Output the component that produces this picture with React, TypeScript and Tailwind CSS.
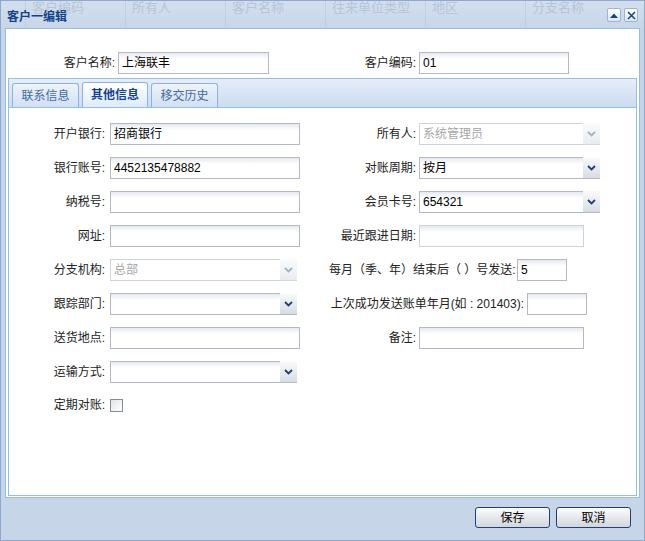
import React from 'react';

const font = "font-['Liberation_Sans','Noto_Sans_CJK_SC',sans-serif]";
const fieldBg = 'bg-[linear-gradient(to_bottom,#e6e9ee,#ffffff_6px)]';

const Chevron: React.FC<{ disabled?: boolean }> = ({ disabled }) => (
  <svg width="9" height="6" viewBox="0 0 9 6">
    <path d="M1 1 L4.5 4.5 L8 1" stroke={disabled ? '#9fb3cf' : '#1d3f7f'} strokeWidth="1.8" fill="none" />
  </svg>
);

const TextField: React.FC<{ value?: string; w: string; faded?: boolean }> = ({ value, w, faded }) => (
  <div
    className={`${w} h-[22px] border ${faded ? 'border-[#cdd3dc]' : 'border-[#b5b8c8]'} ${fieldBg} flex items-center px-[3px] text-[12px] text-black`}
  >
    {value}
  </div>
);

const Combo: React.FC<{ value?: string; w: string; disabled?: boolean }> = ({ value, w, disabled }) => (
  <div className={`${w} h-[22px] flex`}>
    <div
      className={`flex-1 border ${disabled ? 'border-[#cdd3dc] text-[#a6a6a6] bg-white' : `border-[#b5b8c8] text-black ${fieldBg}`} border-r-0 flex items-center px-[3px] text-[12px]`}
    >
      {value}
    </div>
    <div
      className={`w-[17px] h-[22px] border-b ${disabled ? 'border-[#d3d8df] bg-[linear-gradient(to_bottom,#fbfbfb,#e9ecef)]' : 'border-[#b5b8c8] bg-[linear-gradient(to_bottom,#fbfbfb,#d7dce2)]'} flex items-center justify-center`}
    >
      <Chevron disabled={disabled} />
    </div>
  </div>
);

const Label: React.FC<{ text: string; w?: string }> = ({ text, w = 'w-[96px]' }) => (
  <div className={`${w} text-right text-[12px] text-[#222] whitespace-nowrap`}>{text}</div>
);

export default function App() {
  const gridCols = ['客户编码', '所有人', '客户名称', '往来单位类型', '地区', '分支名称'];

  return (
    <div className={`w-[645px] h-[541px] bg-[#c6d5e8] border border-[#8ea9cc] flex flex-col overflow-hidden ${font}`}>
      {/* header */}
      <div className="h-[27px] relative flex items-center bg-[linear-gradient(to_bottom,#d3dfee,#c8d6e9)]">
        <div className="absolute inset-0 flex pl-[24px]">
          {gridCols.map((c) => (
            <div key={c} className="w-[100px] h-full border-l border-[#c0cee0] pl-[6px] text-[13px] text-[#b7c5d8] leading-[14px]">
              {c}
            </div>
          ))}
        </div>
        <div className="relative pl-[6px] pt-[4px] text-[12px] font-bold text-[#15428b]">客户一编辑</div>
        <div className="relative ml-auto mr-[6px] flex gap-[3px] pt-[1px]">
          <div className="w-[14px] h-[14px] rounded-[2px] border border-[#9bb5d8] bg-[linear-gradient(to_bottom,#ffffff,#dbe6f4)] flex items-center justify-center">
            <svg width="8" height="5" viewBox="0 0 8 5">
              <path d="M0 5 L4 0.5 L8 5 Z" fill="#15428b" />
            </svg>
          </div>
          <div className="w-[14px] h-[14px] rounded-[2px] border border-[#9bb5d8] bg-[linear-gradient(to_bottom,#ffffff,#dbe6f4)] flex items-center justify-center">
            <svg width="9" height="9" viewBox="0 0 9 9">
              <path d="M1 1 L8 8 M8 1 L1 8" stroke="#15428b" strokeWidth="1.5" />
            </svg>
          </div>
        </div>
      </div>

      {/* body */}
      <div className="mx-[4px] h-[470px] border border-[#99bbe8] bg-white flex flex-col">
        <div className="h-[49px] pt-[18px] grid grid-cols-[314px_1fr]">
          <div className="flex items-center gap-[3px]">
            <Label text="客户名称:" w="w-[109px]" />
            <TextField value="上海联丰" w="w-[151px]" />
          </div>
          <div className="flex items-center gap-[3px]">
            <Label text="客户编码:" />
            <TextField value="01" w="w-[150px]" />
          </div>
        </div>

        {/* tabs */}
        <div className="mx-[2px] flex-1 mb-[1px] flex flex-col">
          <div className="h-[29px] border-t border-x border-[#99bbe8] bg-[linear-gradient(to_bottom,#e5edf8,#cddcf0)] flex items-end gap-[3px] pl-[3px]">
            <div className="w-[67px] h-[24px] rounded-t-[3px] border border-b-0 border-[#8db2e3] bg-[linear-gradient(to_bottom,#eef3fb,#d2e0f3)] flex items-center justify-center text-[12px] text-[#416aa3]">
              联系信息
            </div>
            <div className="w-[66px] h-[25px] rounded-t-[3px] border border-b-0 border-[#8db2e3] bg-[linear-gradient(to_bottom,#ffffff,#deebfb)] flex items-center justify-center text-[12px] font-bold text-[#15428b]">
              其他信息
            </div>
            <div className="w-[67px] h-[24px] rounded-t-[3px] border border-b-0 border-[#8db2e3] bg-[linear-gradient(to_bottom,#eef3fb,#d2e0f3)] flex items-center justify-center text-[12px] text-[#416aa3]">
              移交历史
            </div>
          </div>
          <div className="flex-1 border border-[#99bbe8] bg-white pt-[15px] flex flex-col gap-[12px]">
            <div className="grid grid-cols-[311px_1fr] h-[22px]">
              <div className="flex items-center gap-[5px]">
                <Label text="开户银行:" />
                <TextField value="招商银行" w="w-[190px]" />
              </div>
              <div className="flex items-center gap-[3px]">
                <Label text="所有人:" />
                <Combo value="系统管理员" w="w-[181px]" disabled />
              </div>
            </div>
            <div className="grid grid-cols-[311px_1fr] h-[22px]">
              <div className="flex items-center gap-[5px]">
                <Label text="银行账号:" />
                <TextField value="4452135478882" w="w-[190px]" />
              </div>
              <div className="flex items-center gap-[3px]">
                <Label text="对账周期:" />
                <Combo value="按月" w="w-[181px]" />
              </div>
            </div>
            <div className="grid grid-cols-[311px_1fr] h-[22px]">
              <div className="flex items-center gap-[5px]">
                <Label text="纳税号:" />
                <TextField w="w-[190px]" />
              </div>
              <div className="flex items-center gap-[3px]">
                <Label text="会员卡号:" />
                <Combo value="654321" w="w-[181px]" />
              </div>
            </div>
            <div className="grid grid-cols-[311px_1fr] h-[22px]">
              <div className="flex items-center gap-[5px]">
                <Label text="网址:" />
                <TextField w="w-[190px]" />
              </div>
              <div className="flex items-center gap-[3px]">
                <Label text="最近跟进日期:" />
                <TextField w="w-[165px]" faded />
              </div>
            </div>
            <div className="grid grid-cols-[311px_1fr] h-[22px]">
              <div className="flex items-center gap-[5px]">
                <Label text="分支机构:" />
                <Combo value="总部" w="w-[187px]" disabled />
              </div>
              <div className="flex items-center gap-[3px] pl-[9px]">
                <Label text="每月（季、年）结束后（ ）号发送:" w="w-[185px]" />
                <TextField value="5" w="w-[50px]" />
              </div>
            </div>
            <div className="grid grid-cols-[311px_1fr] h-[22px]">
              <div className="flex items-center gap-[5px]">
                <Label text="跟踪部门:" />
                <Combo w="w-[187px]" />
              </div>
              <div className="flex items-center gap-[3px] pl-[3px]">
                <Label text="上次成功发送账单年月(如 : 201403):" w="w-[201px]" />
                <TextField w="w-[60px]" />
              </div>
            </div>
            <div className="grid grid-cols-[311px_1fr] h-[22px]">
              <div className="flex items-center gap-[5px]">
                <Label text="送货地点:" />
                <TextField w="w-[190px]" />
              </div>
              <div className="flex items-center gap-[3px]">
                <Label text="备注:" />
                <TextField w="w-[165px]" />
              </div>
            </div>
            <div className="grid grid-cols-[311px_1fr] h-[22px]">
              <div className="flex items-center gap-[5px]">
                <Label text="运输方式:" />
                <Combo w="w-[187px]" />
              </div>
            </div>
            <div className="flex items-center gap-[5px] h-[22px] -mt-[1px]">
              <Label text="定期对账:" />
              <div className="w-[13px] h-[13px] border border-[#878c94] bg-[linear-gradient(to_bottom_right,#e2e4e8,#ffffff)]" />
            </div>
          </div>
        </div>
      </div>

      {/* footer */}
      <div className="flex-1 flex justify-end items-start gap-[6px] pt-[9px] pr-[13px]">
        <button className="w-[75px] h-[21px] rounded-[3px] border border-[#1f4178] bg-[linear-gradient(to_bottom,#fdfdfd,#e6e8ec_50%,#d3d6db)] text-[12px] text-black">
          保存
        </button>
        <button className="w-[75px] h-[21px] rounded-[3px] border border-[#1f4178] bg-[linear-gradient(to_bottom,#fdfdfd,#e6e8ec_50%,#d3d6db)] text-[12px] text-black">
          取消
        </button>
      </div>
    </div>
  );
}
